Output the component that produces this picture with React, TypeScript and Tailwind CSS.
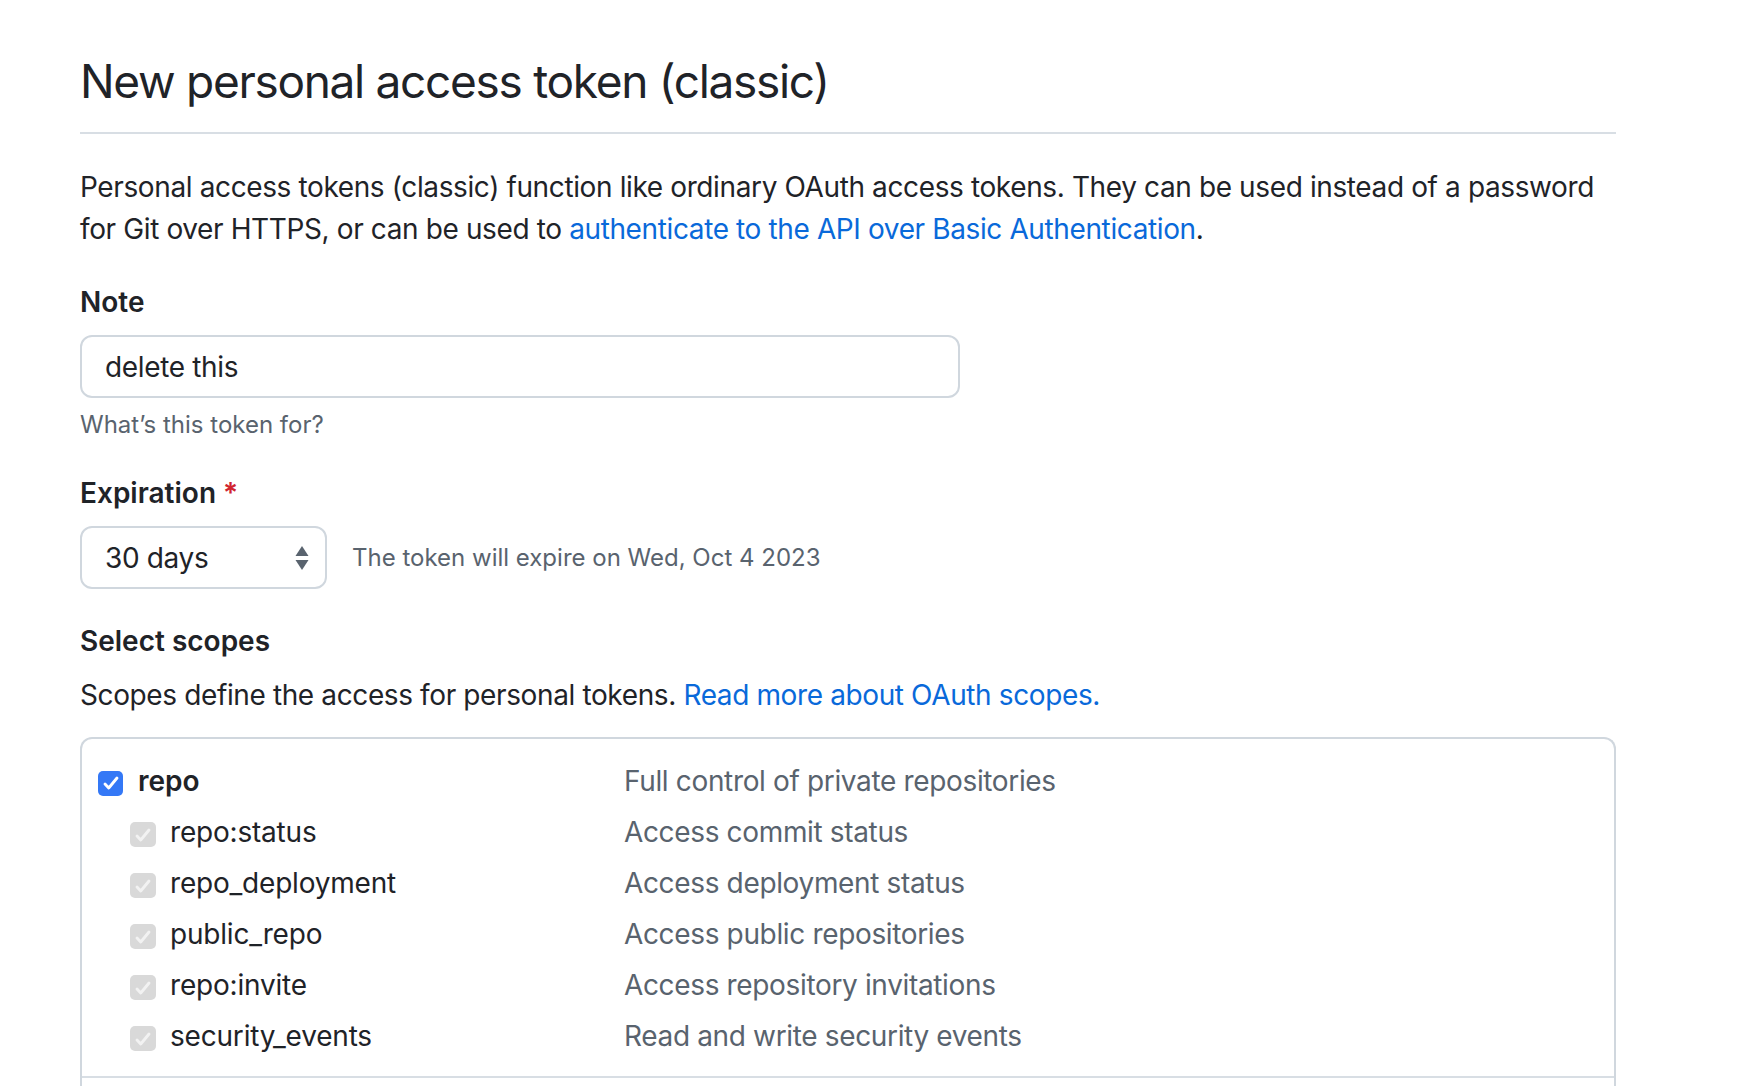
import React from 'react';

const scopes = [
  { name: 'repo:status', desc: 'Access commit status' },
  { name: 'repo_deployment', desc: 'Access deployment status' },
  { name: 'public_repo', desc: 'Access public repositories' },
  { name: 'repo:invite', desc: 'Access repository invitations' },
  { name: 'security_events', desc: 'Read and write security events' },
];

const CheckMark: React.FC<{ color: string }> = ({ color }) => (
  <svg viewBox="0 0 16 16" className="h-[20px] w-[20px]" fill="none">
    <path d="M3.2 8.8l3 3.2 6.6-8" stroke={color} strokeWidth="2.3" strokeLinecap="round" strokeLinejoin="round" />
  </svg>
);

const Checkbox: React.FC<{ disabled?: boolean }> = ({ disabled }) =>
  disabled ? (
    <span className="mt-[6px] flex h-[25px] w-[26px] shrink-0 items-center justify-center rounded-[5px] bg-[#d9d9d9]">
      <CheckMark color="#f2f2f2" />
    </span>
  ) : (
    <span className="mt-[5px] flex h-[25px] w-[25px] shrink-0 items-center justify-center rounded-[5px] bg-[#3478f6]">
      <CheckMark color="#ffffff" />
    </span>
  );

const App: React.FC = () => {
  return (
    <div className="min-h-screen bg-white text-[#1f2328] font-['Inter','Noto_Sans',sans-serif]">
      <div className="w-[1536px] ml-[80px] pt-[46px]">
        {/* Subhead */}
        <div className="border-b-2 border-[#d8dee4] pb-[16px]">
          <h1 className="text-[46px] leading-[70px] font-normal tracking-[-1.3px]">
            New personal access token (classic)
          </h1>
        </div>

        <p className="mt-[32px] text-[28px] leading-[42px] tracking-[-0.38px]">
          Personal access tokens (classic) function like ordinary OAuth access tokens. They can be used instead of a password for Git over HTTPS, or can be used to{' '}
          <a className="text-[#0969da]">authenticate to the API over Basic Authentication</a>.
        </p>

        {/* Note */}
        <div className="mt-[31px]">
          <label className="block text-[28px] leading-[42px] font-semibold">Note</label>
          <div className="mt-[12px] flex h-[63px] w-[880px] items-center rounded-[12px] border-2 border-[#d0d7de] px-[23px] text-[28px] tracking-[-0.35px]">
            delete this
          </div>
          <p className="mt-[9px] text-[24px] leading-[36px] text-[#59636e]">What’s this token for?</p>
        </div>

        {/* Expiration */}
        <div className="mt-[29px]">
          <label className="block text-[28px] leading-[42px] font-semibold">
            Expiration <span className="text-[#d1242f]">*</span>
          </label>
          <div className="mt-[12px] flex items-center">
            <div className="flex h-[63px] w-[247px] items-center justify-between rounded-[12px] border-2 border-[#d0d7de] pl-[23px] pr-[16px] text-[28px] tracking-[-0.35px]">
              <span>30 days</span>
              <svg viewBox="0 0 14 26" className="h-[26px] w-[14px]" fill="#59636e">
                <path d="M7 1 L13.5 11 L0.5 11 Z" />
                <path d="M7 25 L13.5 15 L0.5 15 Z" />
              </svg>
            </div>
            <span className="ml-[25px] text-[24px] text-[#59636e]">The token will expire on Wed, Oct 4 2023</span>
          </div>
        </div>

        {/* Scopes */}
        <div className="mt-[31px]">
          <h3 className="text-[28px] leading-[42px] font-semibold">Select scopes</h3>
          <p className="mt-[12px] text-[28px] leading-[42px] tracking-[-0.38px]">
            Scopes define the access for personal tokens.{' '}
            <a className="text-[#0969da]">Read more about OAuth scopes.</a>
          </p>

          <div className="mt-[21px] rounded-t-[12px] border-2 border-b-0 border-[#d0d7de]">
            <div className="border-b-2 border-[#d8dee4] pl-[16px] pt-[16px] pb-[15px]">
              <div className="flex h-[51px] items-center">
                <div className="flex w-[526px] items-center">
                  <Checkbox />
                  <span className="ml-[15px] text-[28px] font-semibold">repo</span>
                </div>
                <span className="text-[28px] tracking-[-0.35px] text-[#59636e]">Full control of private repositories</span>
              </div>
              {scopes.map((s) => (
                <div key={s.name} className="flex h-[51px] items-center">
                  <div className="flex w-[526px] items-center pl-[32px]">
                    <Checkbox disabled />
                    <span className="ml-[14px] text-[28px] tracking-[-0.2px]">{s.name}</span>
                  </div>
                  <span className="text-[28px] tracking-[-0.35px] text-[#59636e]">{s.desc}</span>
                </div>
              ))}
            </div>
            <div className="h-[40px]" />
          </div>
        </div>
      </div>
    </div>
  );
};

export default App;
